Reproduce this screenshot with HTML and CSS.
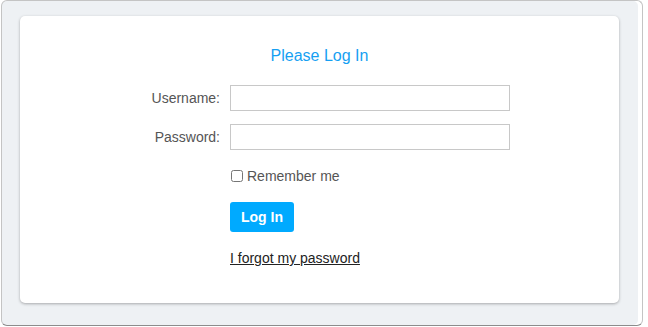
FILE: index.html
```html
<!DOCTYPE html>
<html>

<head>
    <link rel="stylesheet" href="styles.css">
</head>

<body>
    <div class="window">
        <div class="card">
            <p class="title">Please Log In</p>
            <form class="login_form">
                <label class="label" for="username">Username:</label>
                <input type="text" id="username" class="field">
                <label class="label" for="password">Password:</label>
                <input type="password" id="password" class="field">
                <label class="remember">
                    <input type="checkbox" class="check">
                    Remember me
                </label>
                <div class="actions">
                    <button type="button" class="login_btn">Log In</button>
                </div>
                <div class="forgot_row">
                    <a href="./" class="forgot">I forgot my password</a>
                </div>
            </form>
        </div>
    </div>
</body>

</html>
```

FILE: styles.css
```css
body {
    margin: 0;
    padding-left: 1px;
    font-family: "Liberation Sans", Arial, sans-serif;
    color: #555;
    background-color: white;
}

.window {
    box-sizing: border-box;
    width: 642px;
    height: 326px;
    background-color: #eef1f4;
    border: 1px solid #c4c4c4;
    border-bottom-color: #8c8c8c;
    border-radius: 6px;
    box-shadow: inset -4px 0 0 white;
    padding: 15px 23px 0 18px;
}

.card {
    background-color: white;
    border-radius: 5px;
    box-shadow: 0px 1px 3px 0px rgba(0, 0, 0, 0.3);
    height: 287px;
    box-sizing: border-box;
    padding-top: 30px;
}

.title {
    margin: 0;
    text-align: center;
    color: #169ff2;
    font-size: 16px;
    line-height: 20px;
}

.login_form {
    display: grid;
    grid-template-columns: 200px 280px;
    column-gap: 10px;
    row-gap: 13px;
    margin-top: 19px;
    font-size: 14px;
}

.label {
    text-align: right;
    line-height: 26px;
}

.field {
    box-sizing: border-box;
    height: 26px;
    margin: 0;
    border: 1px solid #c8c8c8;
    font-family: inherit;
}

.remember {
    grid-column: 2;
    display: flex;
    align-items: center;
    gap: 4px;
    line-height: 18px;
    margin-top: 4px;
}

.check {
    margin: 0 0 0 1px;
    width: 12px;
    height: 12px;
}

.actions {
    grid-column: 2;
    margin-top: 4px;
}

.login_btn {
    width: 64px;
    height: 30px;
    border: none;
    border-radius: 3px;
    background-color: #00aaff;
    color: white;
    font-family: inherit;
    font-size: 14px;
    font-weight: bold;
    padding: 0;
}

.forgot_row {
    grid-column: 2;
    margin-top: 4px;
    line-height: 18px;
}

.forgot {
    color: #222;
    text-decoration: underline;
}
```
